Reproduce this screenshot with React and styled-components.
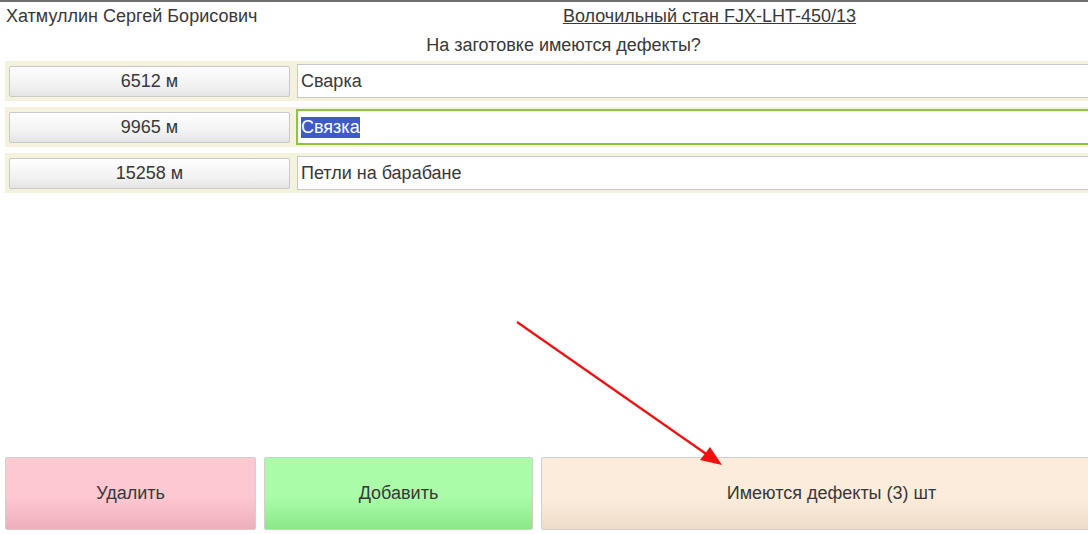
import React from 'react';
import styled, { createGlobalStyle } from 'styled-components';

const GlobalStyle = createGlobalStyle`
  html, body {
    margin: 0;
    padding: 0;
    background: #ffffff;
    overflow: hidden;
  }
  body {
    font-family: 'Liberation Sans', Arial, sans-serif;
  }
`;

const Viewport = styled.div`
  position: relative;
  width: 1088px;
  height: 534px;
  overflow: hidden;
  border-top: 2px solid #6f6f6f;
  box-sizing: border-box;
`;

const Form = styled.div`
  width: 1127px;
  height: 100%;
  display: flex;
  flex-direction: column;
  padding: 0 5px 4px 5px;
  box-sizing: border-box;
  color: #383838;
  font-size: 18px;
`;

const Header = styled.div`
  display: grid;
  grid-template-columns: 292px 1fr;
  height: 28px;
  align-items: center;
`;

const UserName = styled.div`
  padding-left: 1px;
  white-space: nowrap;
`;

const Title = styled.a`
  justify-self: center;
  color: #383838;
  text-decoration: underline;
  white-space: nowrap;
  cursor: pointer;
`;

const Question = styled.div`
  text-align: center;
  height: 31px;
  line-height: 31px;
`;

const List = styled.div`
  display: flex;
  flex-direction: column;
  gap: 6px;
`;

const Row = styled.div`
  display: grid;
  grid-template-columns: 281px 1fr;
  gap: 7px;
  align-items: center;
  height: 40px;
  padding: 0 0 0 4px;
  background: #f4f2dc;
`;

const LengthButton = styled.button`
  height: 31px;
  border: 1px solid #c9c9c9;
  border-radius: 2px;
  background: linear-gradient(#ffffff, #f0f0f0 70%, #e4e4e4);
  color: #383838;
  font: inherit;
  padding: 0;
`;

const Field = styled.div`
  height: ${p => (p.$focused ? '36px' : '34px')};
  box-sizing: border-box;
  border: ${p => (p.$focused ? '2px solid #8cc63f' : '1px solid #c8c8c8')};
  background: #ffffff;
  display: flex;
  align-items: center;
  padding-left: ${p => (p.$focused ? '3px' : '3px')};
  margin-left: ${p => (p.$focused ? '-1px' : '0')};
`;

const Selected = styled.span`
  background: #3d5ac8;
  color: #ffffff;
  line-height: 21px;
`;

const Spacer = styled.div`
  flex: 1;
`;

const Actions = styled.div`
  display: grid;
  grid-template-columns: 251px 269px 1fr;
  gap: 8px;
  height: 73px;
`;

const palette = {
  red: ['#fec8d2', '#eeaeb9'],
  green: ['#aafca8', '#8be888'],
  beige: ['#fcecdc', '#eedcc8'],
};

const ActionButton = styled.button`
  border: 1px solid #cfcfcf;
  border-radius: 2px;
  background: linear-gradient(${p => palette[p.$tone][0]} 55%, ${p => palette[p.$tone][1]});
  color: #383838;
  font: inherit;
  padding: 0;
`;

const Arrow = styled.svg`
  position: absolute;
  left: 0;
  top: 0;
  pointer-events: none;
`;

const rows = [
  { length: '6512 м', defect: 'Сварка' },
  { length: '9965 м', defect: 'Связка', focused: true },
  { length: '15258 м', defect: 'Петли на барабане' },
];

export default function App() {
  return (
    <>
      <GlobalStyle />
      <Viewport>
        <Form>
          <Header>
            <UserName>Хатмуллин Сергей Борисович</UserName>
            <Title>Волочильный стан FJX-LHT-450/13</Title>
          </Header>
          <Question>На заготовке имеются дефекты?</Question>
          <List>
            {rows.map(r => (
              <Row key={r.length}>
                <LengthButton>{r.length}</LengthButton>
                <Field $focused={r.focused}>
                  {r.focused ? <Selected>{r.defect}</Selected> : r.defect}
                </Field>
              </Row>
            ))}
          </List>
          <Spacer />
          <Actions>
            <ActionButton $tone="red">Удалить</ActionButton>
            <ActionButton $tone="green">Добавить</ActionButton>
            <ActionButton $tone="beige">Имеются дефекты (3) шт</ActionButton>
          </Actions>
        </Form>
        <Arrow width="1088" height="534" viewBox="0 0 1088 534">
          <line x1="517" y1="320" x2="712" y2="456" stroke="#f01010" strokeWidth="2.2" />
          <polygon points="722,463 700,458 710,445" fill="#f01010" />
        </Arrow>
      </Viewport>
    </>
  );
}
